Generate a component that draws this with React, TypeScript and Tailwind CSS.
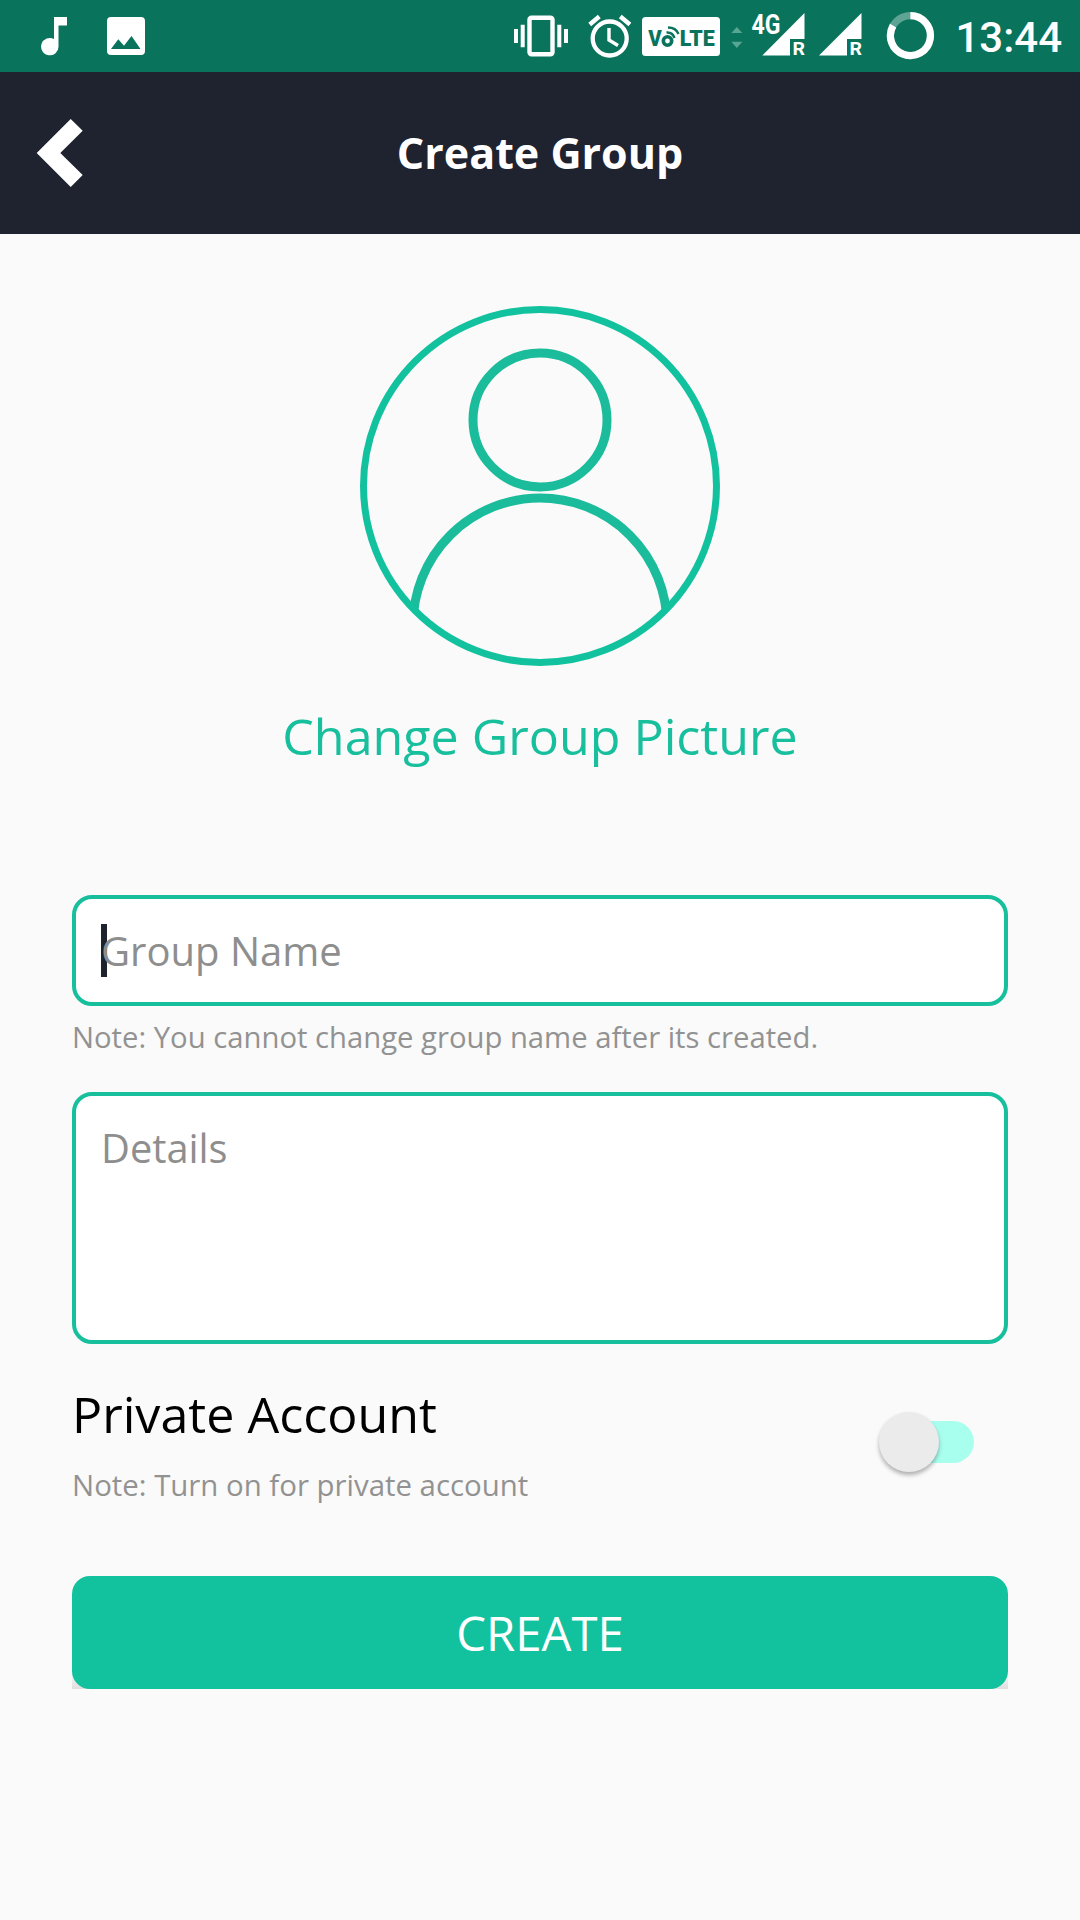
const StatusBar = () => {
  return (
    <header className="flex h-[72px] items-center bg-[#09735b] text-white">
      <svg className="ml-[40px] shrink-0" width="28" height="72" viewBox="40 0 28 72" fill="currentColor">
        <path d="M54 17h13v8.400h-8.500v21a8.700 8.700 0 1 1-4.500-7.400z" />
      </svg>
      <svg className="ml-[38px] shrink-0" width="40" height="72" viewBox="106 0 40 72" fill="currentColor">
        <path
          fillRule="evenodd"
          d="M111 17h30a4 4 0 0 1 4 4v30a4 4 0 0 1-4 4h-30a4 4 0 0 1-4-4v-30a4 4 0 0 1 4-4zM111 49h29.500l-9-13-7.500 9.700-5.700-6.400z"
        />
      </svg>

      <svg className="ml-auto shrink-0" width="56" height="72" viewBox="513 0 56 72" fill="currentColor">
        <path d="M514 29h4v14h-4zM520.700 24.700h4v22.600h-4zM557.300 24.700h4v22.600h-4zM564 29h4v14h-4z" />
        <rect x="529.500" y="17.700" width="23" height="36.600" rx="2" fill="none" stroke="currentColor" strokeWidth="4.400" />
      </svg>
      <svg className="ml-[18px] shrink-0" width="46" height="72" viewBox="587 0 46 72" fill="none" stroke="currentColor">
        <circle cx="609.700" cy="38.500" r="17" strokeWidth="4.300" />
        <path d="M609 28v12l9 5.500" strokeWidth="3.400" />
        <path d="M589.700 24.500l9.600-8M620.300 16.500l9.600 8" strokeWidth="4.400" />
      </svg>
      <svg className="ml-[9px] shrink-0" width="78" height="72" viewBox="642 0 78 72">
        <rect x="642" y="17" width="78" height="39" rx="3.500" fill="#fff" />
        <g fill="#09735b" className="font-['Roboto'] font-black">
          <text x="648.300" y="45.700" fontSize="22" textLength="13.500" lengthAdjust="spacingAndGlyphs">V</text>
          <text x="679.700" y="45.700" fontSize="22" textLength="35" lengthAdjust="spacingAndGlyphs">LTE</text>
        </g>
        <g fill="none" stroke="#09735b">
          <circle cx="667.500" cy="41" r="4.200" strokeWidth="3.600" />
          <path d="M666.500 32.500q6-.5 8 5.500M668 27.500q8 0 10.500 6.500" strokeWidth="2.400" />
        </g>
      </svg>
      <svg className="ml-[10px] shrink-0" width="14" height="72" viewBox="730 0 14 72" fill="#58a592">
        <path d="M731.300 33h11l-5.500-6zM731.300 41.700h11l-5.500 6.300z" />
      </svg>
      <svg className="ml-[7px] shrink-0" width="55" height="72" viewBox="751 0 55 72" fill="currentColor">
        <text x="751.500" y="33.500" fontSize="27" textLength="29" lengthAdjust="spacingAndGlyphs" className="font-['Roboto'] font-bold">4G</text>
        <path d="M804.500 13v26h-14.500v16.500h-27.700z" />
        <text x="792.500" y="54.700" fontSize="18.500" textLength="12.500" lengthAdjust="spacingAndGlyphs" className="font-['Roboto'] font-bold">R</text>
      </svg>
      <svg className="ml-[12px] shrink-0" width="45" height="72" viewBox="818 0 45 72" fill="currentColor">
        <path d="M861.500 13v26h-14.500v16.500h-28z" />
        <text x="849.500" y="54.700" fontSize="18.500" textLength="12.500" lengthAdjust="spacingAndGlyphs" className="font-['Roboto'] font-bold">R</text>
      </svg>
      <svg className="ml-[23px] shrink-0" width="49" height="72" viewBox="886 0 49 72" fill="none" stroke="currentColor" strokeWidth="7.200">
        <circle cx="910.400" cy="35.600" r="20" strokeOpacity="0.350" />
        <path d="M910.400 15.600a20 20 0 1 1-17.300 10" />
      </svg>
      <span className="mr-[18px] ml-[19px] w-[108px] pt-[3px] text-right font-['Roboto'] text-[42px] leading-[72px] font-medium whitespace-nowrap">
        13:44
      </span>
    </header>
  );
};

const Navbar = () => {
  return (
    <nav className="grid h-[162px] grid-cols-[120px_1fr_120px] items-center bg-[#1e232f] text-white">
      <button aria-label="Back" className="pl-[36px]">
        <svg width="48" height="70" viewBox="36 118 48 70" fill="currentColor">
          <path d="M36.700 153l34-34 12 11.700-22.400 22.300 22.400 22-12 12z" />
        </svg>
      </button>
      <h1 className="pb-0.5 text-center text-[43px] leading-none font-bold">Create Group</h1>
    </nav>
  );
};

const Avatar = () => {
  return (
    <svg width="360" height="360" viewBox="0 0 360 360" fill="none">
      <clipPath id="avatar-clip">
        <circle cx="180" cy="180" r="176" />
      </clipPath>
      <g stroke="#1bbc9b" strokeWidth="9" clipPath="url(#avatar-clip)">
        <circle cx="180" cy="114" r="67" />
        <path d="M53 319a127 127 0 0 1 254 0" />
      </g>
      <circle cx="180" cy="180" r="176.500" stroke="#12c29e" strokeWidth="7" />
    </svg>
  );
};

const App = () => {
  return (
    <div className="h-[1920px] w-[1080px] overflow-hidden bg-[#fafafa] font-['Open_Sans',sans-serif]">
      <StatusBar />
      <Navbar />
      <main className="flex flex-col px-[72px] pt-[72px]">
        <div className="flex flex-col items-center">
          <Avatar />
          <button className="mt-[36px] text-[50.200px] leading-[68px] text-[#17bf9d]">Change Group Picture</button>
        </div>

        <div className="relative mt-[125px] h-[111px] rounded-[20px] border-4 border-[#17bf9d] bg-white">
          <span className="absolute top-[25px] left-[25px] h-[53px] w-[6px] bg-[#1e232f]" />
          <input
            placeholder="Group Name"
            className="relative h-full w-full px-[25px] text-[40px] outline-none placeholder:text-[#8e8e8e]"
          />
        </div>
        <p className="mt-[10px] text-[29.250px] leading-[42px] text-[#929292]">
          Note: You cannot change group name after its created.
        </p>
        <textarea
          placeholder="Details"
          className="mt-[34px] h-[252px] resize-none rounded-[20px] border-4 border-[#17bf9d] bg-white px-[25px] py-[25px] text-[39.800px] leading-[54px] outline-none placeholder:text-[#8e8e8e]"
        />

        <div className="mt-[36px] flex justify-between">
          <div>
            <h2 className="text-[50.200px] leading-[68px] text-black">Private Account</h2>
            <p className="mt-[16px] text-[29.400px] leading-[42px] text-[#929292]">Note: Turn on for private account</p>
          </div>
          <button role="switch" aria-checked="false" aria-label="Private Account" className="relative mt-[41px] mr-[34px] h-[42px] w-[84px] rounded-full bg-[#a9ffee]">
            <span className="absolute top-[-9px] left-[-11px] size-[60px] rounded-full bg-[#ebebeb] shadow-[0_3px_4px_rgba(0,0,0,0.3)]" />
          </button>
        </div>

        <div className="mt-[70px] overflow-hidden bg-[linear-gradient(#fafafa_85%,#e0dede)]">
          <button className="block h-[113px] w-full rounded-[18px] bg-[#12c29e] pt-0.5 text-[47.300px] text-white">CREATE</button>
        </div>
      </main>
    </div>
  );
};

export default App;
